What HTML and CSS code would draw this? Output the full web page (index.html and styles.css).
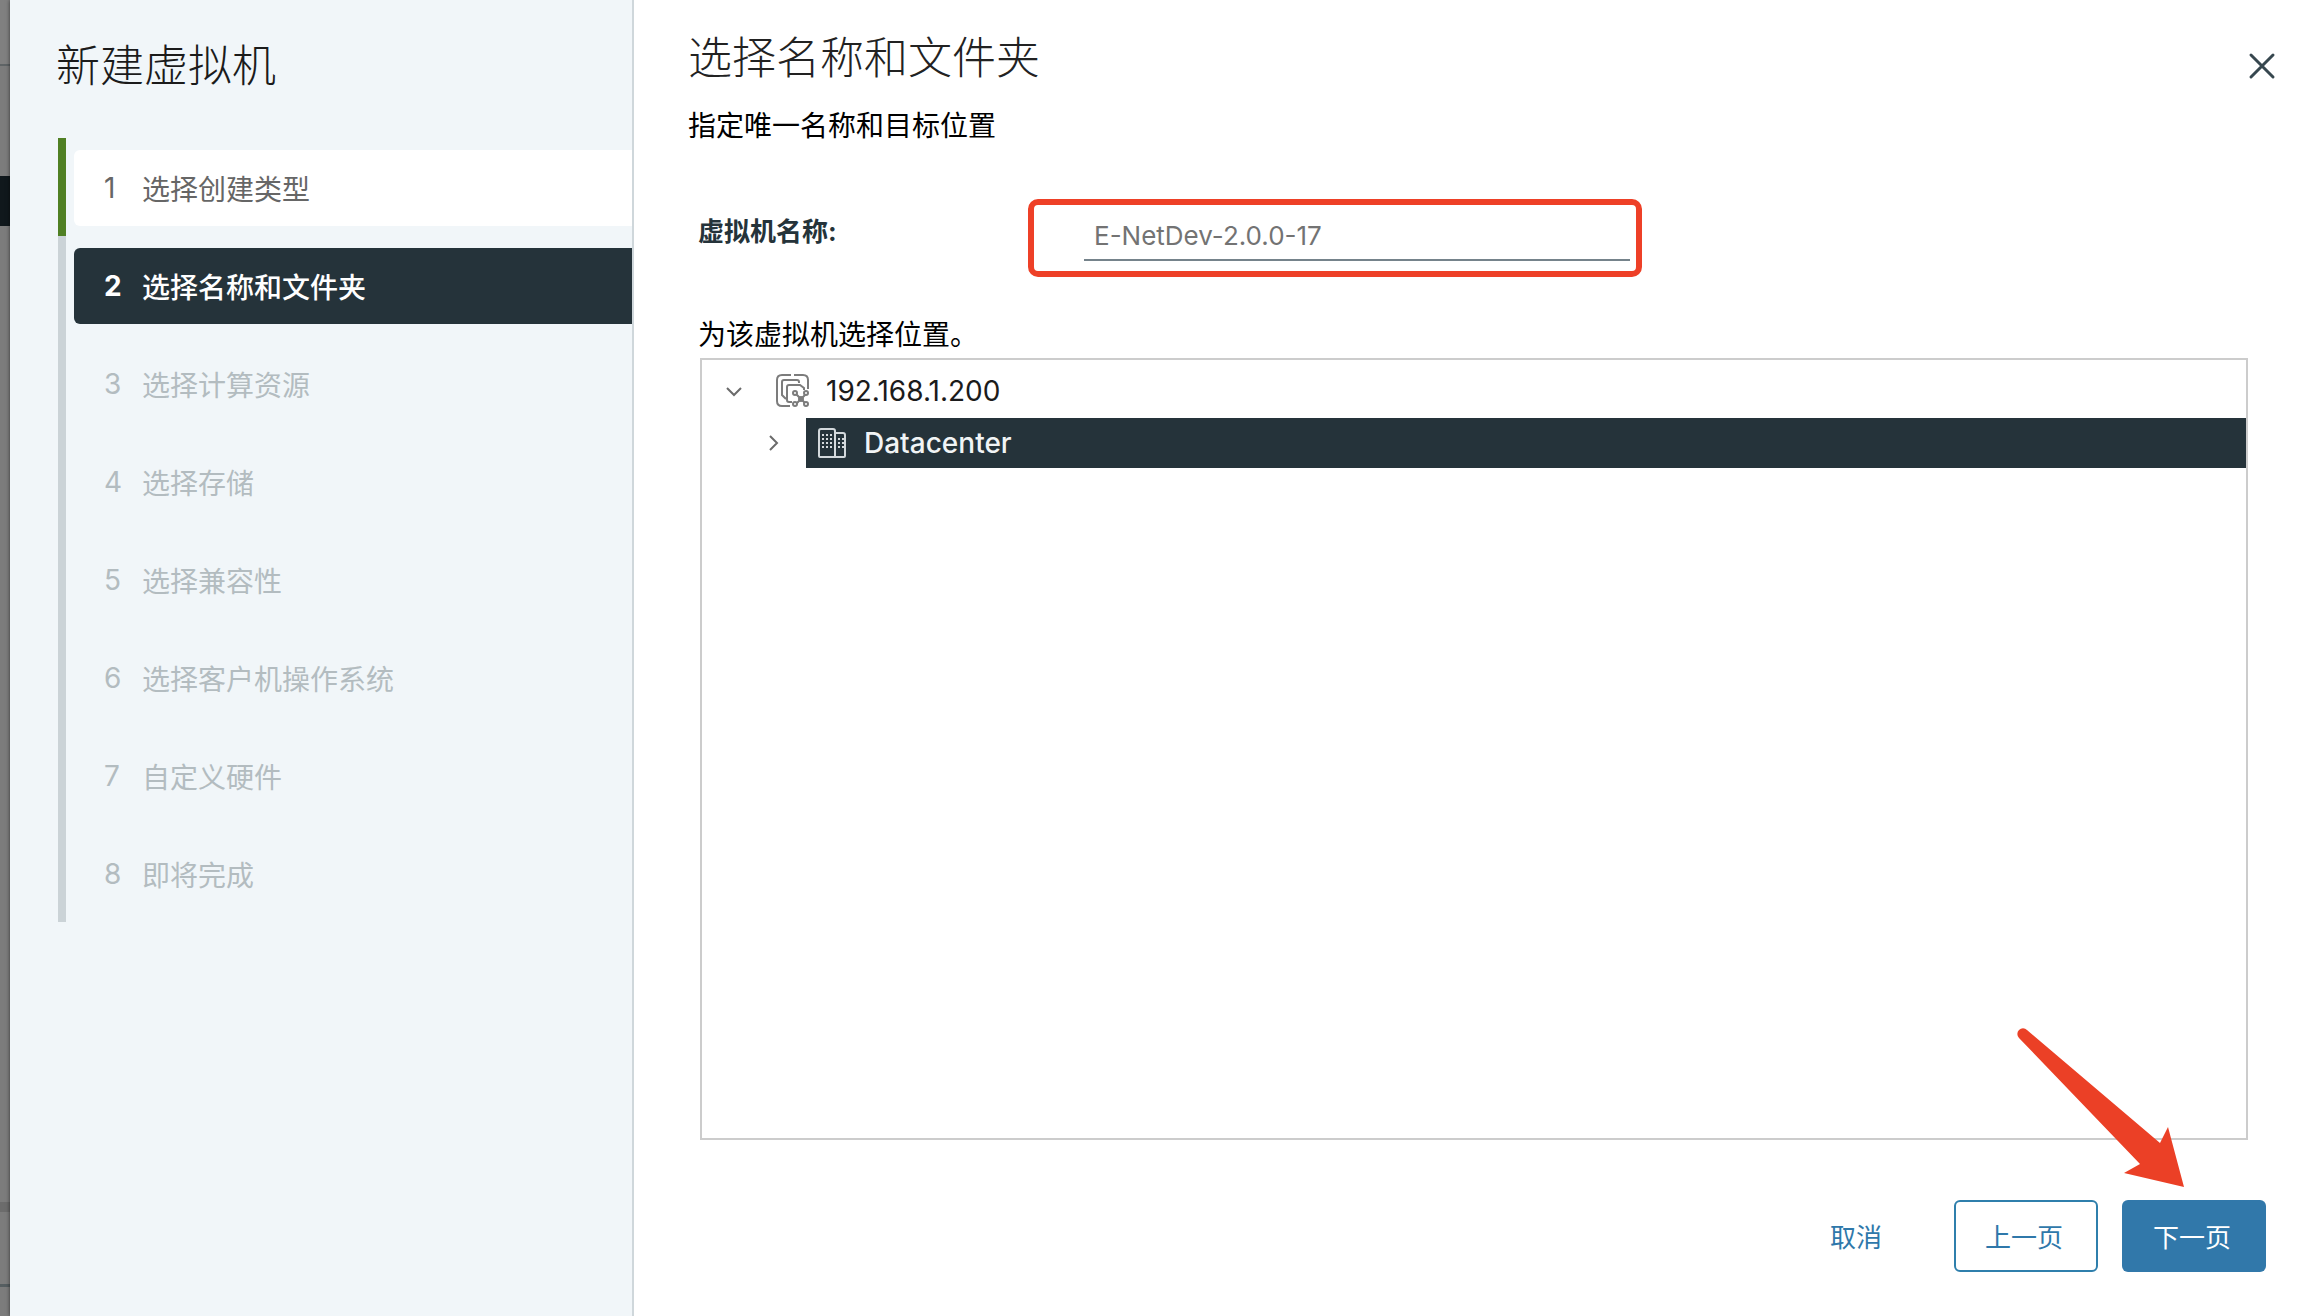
FILE: index.html
```html
<!DOCTYPE html>
<html lang="zh-CN">

<head>
    <meta charset="UTF-8">
    <meta name="viewport" content="width=device-width, initial-scale=1.0">
    <title>新建虚拟机</title>
    <link rel="stylesheet" href="styles.css">
</head>

<body>
    <div class="wizard">
        <aside class="sidebar">
            <h1 class="wizard-title">新建虚拟机</h1>
            <ol class="steps">
                <li class="step done"><a href="#"><span class="num">1</span>选择创建类型</a></li>
                <li class="step current"><a href="#" aria-current="step"><span class="num">2</span>选择名称和文件夹</a></li>
                <li class="step"><a href="#"><span class="num">3</span>选择计算资源</a></li>
                <li class="step"><a href="#"><span class="num">4</span>选择存储</a></li>
                <li class="step"><a href="#"><span class="num">5</span>选择兼容性</a></li>
                <li class="step"><a href="#"><span class="num">6</span>选择客户机操作系统</a></li>
                <li class="step"><a href="#"><span class="num">7</span>自定义硬件</a></li>
                <li class="step"><a href="#"><span class="num">8</span>即将完成</a></li>
            </ol>
        </aside>

        <main class="content">
            <header class="page-header">
                <div>
                    <h2 class="page-title">选择名称和文件夹</h2>
                    <p class="page-desc">指定唯一名称和目标位置</p>
                </div>
                <button class="close-btn" type="button" aria-label="关闭">
                    <svg width="28" height="28" viewBox="0 0 28 28">
                        <path d="M3 3L25 25M25 3L3 25" fill="none" stroke="#37474f" stroke-width="3" stroke-linecap="round" />
                    </svg>
                </button>
            </header>

            <div class="form-row">
                <label for="vm-name">虚拟机名称:</label>
                <div class="highlight">
                    <input type="text" id="vm-name" value="E-NetDev-2.0.0-17">
                </div>
            </div>

            <p class="location-label">为该虚拟机选择位置。</p>
            <div class="tree">
                <div class="tree-row">
                    <button class="toggle" type="button" aria-label="折叠">
                        <svg width="20" height="20" viewBox="0 0 20 20">
                            <path d="M3 7L10 14L17 7" fill="none" stroke="#6b6b6b" stroke-width="2" />
                        </svg>
                    </button>
                    <a class="node" href="#">
                        <svg width="34" height="34" viewBox="0 0 34 34" fill="none" stroke="#7c7c7c" stroke-width="2">
                            <path d="M14 32H6Q1 32 1 27V6Q1 1 6 1H15M18 1H27Q32 1 32 6V15" />
                            <path d="M10 25L6 21V8Q6 6 8 6H21Q23 6 23 8V9" />
                            <path d="M16 28H13Q11 28 11 26V13Q11 11 13 11H24L28 14V16" />
                            <path d="M20 20L30 30M30 20L20 30" />
                            <g fill="#fff">
                                <circle cx="19" cy="19" r="2" />
                                <circle cx="30" cy="19" r="2" />
                                <circle cx="19" cy="30" r="2" />
                                <circle cx="30" cy="30" r="2" />
                            </g>
                            <circle cx="25" cy="25" r="2" fill="#7c7c7c" />
                        </svg>
                        <span>192.168.1.200</span>
                    </a>
                </div>
                <div class="tree-row child">
                    <button class="toggle" type="button" aria-label="展开">
                        <svg width="20" height="20" viewBox="0 0 20 20">
                            <path d="M6 3L13 10L6 17" fill="none" stroke="#6b6b6b" stroke-width="2" />
                        </svg>
                    </button>
                    <a class="node selected" href="#">
                        <svg width="32" height="32" viewBox="0 0 32 32" fill="none" stroke="#d3d9dc" stroke-width="2">
                            <path d="M19 30H4Q3 30 3 29V4Q3 2 5 2H17Q19 2 19 4V30H28Q29 30 29 29V8Q29 6 27 6H19" />
                            <path d="M6 8H17M6 12H17M6 16H17M6 20H17M22 12H28M22 16H28M22 20H28" stroke-dasharray="2 2" />
                        </svg>
                        <span>Datacenter</span>
                    </a>
                </div>
            </div>

            <footer class="actions">
                <button class="btn btn-link" type="button">取消</button>
                <button class="btn btn-outline" type="button">上一页</button>
                <button class="btn btn-primary" type="button">下一页</button>
                <svg class="pointer" width="168" height="160" viewBox="0 0 168 160" aria-hidden="true">
                    <path d="M11 3L144 116L152 100L168 160L108 146L124 137L3 11A5 5 0 0 1 11 3Z" fill="#eb4026" />
                </svg>
            </footer>
        </main>
    </div>
</body>

</html>
```
FILE: styles.css
```css
* {
    box-sizing: border-box;
}

body {
    margin: 0;
    font-family: Inter, 'Noto Sans CJK SC', sans-serif;
    font-size: 28px;
    color: #1b1b1b;
    /* dimmed page behind the dialog */
    background: linear-gradient(#808080 64px, #5f6466 64px 66px, #7c7c7c 66px 176px, #10181c 176px 226px, #7c7c7c 226px 1202px, #6c6c6c 1202px 1212px, #7c7c7c 1212px 1284px, #565e61 1284px 1287px, #7c7c7c 1287px);
}

h1,
h2,
p,
ol {
    margin: 0;
    padding: 0;
    font-weight: normal;
}

a {
    color: inherit;
    text-decoration: none;
}

button {
    font: inherit;
    background: none;
    border: none;
    padding: 0;
    cursor: pointer;
}

svg {
    display: block;
    flex: none;
}

.wizard {
    display: flex;
    min-height: 100vh;
    margin-left: 10px;
    background: #fff;
    box-shadow: 0 0 4px #0009;
}

.sidebar {
    width: 624px;
    flex: none;
    padding: 36px 0 0 46px;
    background: #f1f6f9;
    border-right: 2px solid #cfd7db;
}

.wizard-title,
.page-title {
    font-size: 44px;
    font-weight: 300;
    line-height: 60px;
}

.steps {
    margin: 42px 0 0 2px;
    list-style: none;
}

.step {
    padding: 12px 0 10px 8px;
    border-left: 8px solid #cbd3d7;
    color: #b3bcc0;
}

.step a {
    display: flex;
    align-items: center;
    height: 76px;
    padding-left: 30px;
    border-radius: 6px 0 0 6px;
}

.num {
    width: 38px;
}

.step.done {
    border-left-color: #508024;
    color: #666;
}

.step.done a {
    background: #fff;
}

.step.current {
    color: #fff;
    font-weight: 500;
}

.step.current a {
    background: #25333a;
}

.step.current .num {
    font-weight: bold;
}

.content {
    flex: 1;
    display: flex;
    flex-direction: column;
    padding: 28px 46px 44px 54px;
}

.page-header {
    display: flex;
    justify-content: space-between;
    align-items: flex-start;
}

.page-title {
    color: #222;
}

.page-desc {
    margin-top: 18px;
    line-height: 40px;
    color: #000;
}

.close-btn {
    padding: 24px 4px;
    margin-right: -14px;
}

.form-row {
    display: flex;
    align-items: flex-start;
    margin-top: 53px;
    padding-left: 10px;
}

.form-row label {
    width: 330px;
    padding-top: 13px;
    font-size: 26px;
    font-weight: bold;
    line-height: 40px;
    color: #25333a;
}

.highlight {
    width: 614px;
    padding: 8px 6px 10px 50px;
    border: 6px solid #ee4027;
    border-radius: 10px;
}

.highlight input {
    display: block;
    width: 100%;
    height: 48px;
    padding: 0 10px 2px;
    font: inherit;
    font-size: 26px;
    color: #737373;
    background: none;
    border: none;
    border-bottom: 2px solid #75838b;
    outline: none;
}

.location-label {
    margin: 38px 0 3px;
    padding-left: 10px;
    line-height: 40px;
    color: #000;
}

.tree {
    flex: 1;
    margin: 0 18px 0 12px;
    padding-top: 5px;
    border: 2px solid #ccc;
}

.tree-row {
    display: flex;
    align-items: center;
    height: 52px;
    padding-left: 22px;
}

.tree-row.child {
    padding-left: 62px;
}

.node {
    flex: 1;
    display: flex;
    align-items: center;
    gap: 16px;
    height: 50px;
    margin-left: 22px;
    padding-left: 10px;
}

.node.selected {
    background: #25333a;
    color: #f1f4f5;
    font-weight: 500;
}

.actions {
    position: relative;
    display: flex;
    justify-content: flex-end;
    gap: 24px;
    margin-top: 60px;
}

.btn {
    min-width: 144px;
    height: 72px;
    padding: 0 4px 2px 0;
    font-size: 26px;
    border-radius: 6px;
    color: #2f78aa;
}

.btn-outline {
    border: 2px solid #2f7fac;
}

.btn-primary {
    background: #3178aa;
    color: #fff;
}

/* arrow over the primary button */
.pointer {
    position: absolute;
    right: 82px;
    bottom: 85px;
    pointer-events: none;
}
```
